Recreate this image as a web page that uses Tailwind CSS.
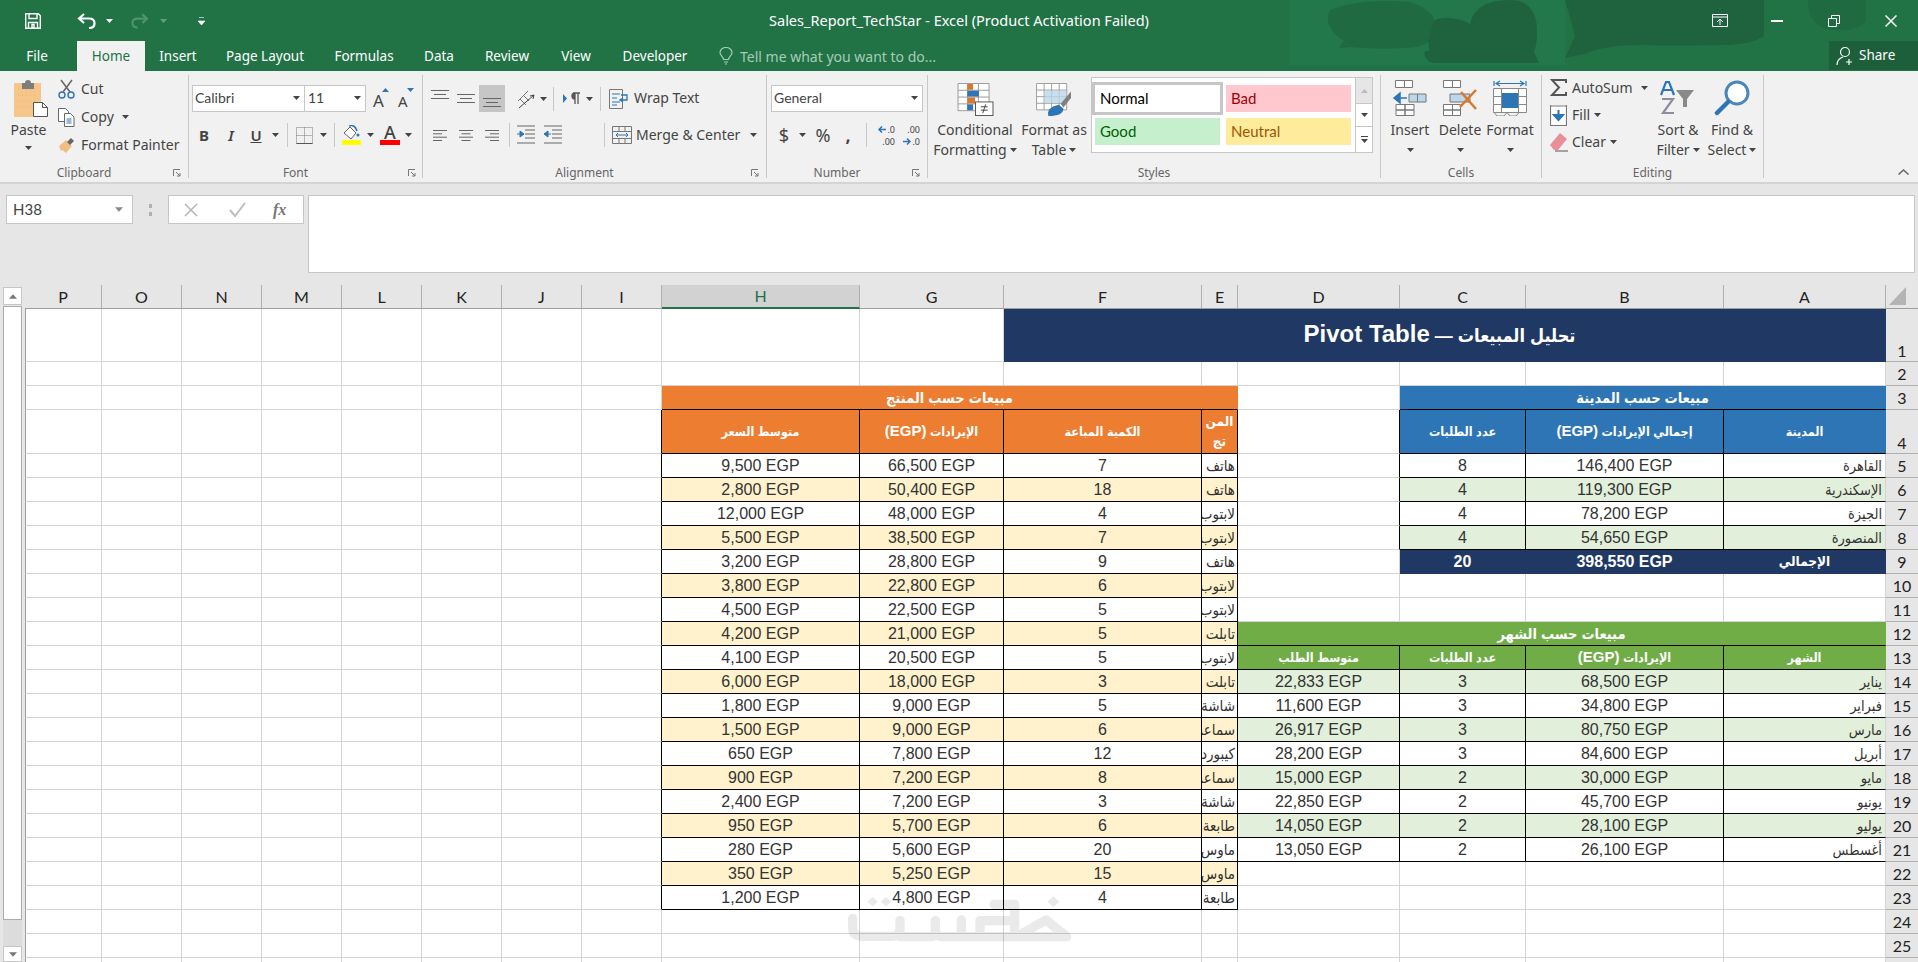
<!DOCTYPE html>
<html lang="en">
<head>
<meta charset="UTF-8">
<title>Sales_Report_TechStar - Excel</title>
<script src="https://cdn.jsdelivr.net/npm/@tailwindcss/browser@4"></script>
</head>
<body class="h-screen overflow-hidden flex flex-col bg-[#e6e6e6] font-['Noto_Sans',sans-serif] text-[#444]">

<svg class="hidden">
  <symbol id="caret" viewBox="0 0 7 4"><path d="M0 0h7L3.5 4z" fill="currentColor"/></symbol>
  <symbol id="launcher" viewBox="0 0 8 8"><path d="M.5 7V.5H7M3 3l4 4M7 4v3H4" fill="none" stroke="#777"/></symbol>
</svg>

<!-- Title bar and tabs -->
<header class="relative h-[71px] shrink-0 bg-[#217346] text-white">
  <svg class="absolute left-0 top-0 w-[1918px] h-[65px]" viewBox="0 0 1918 65">
    <path d="M1290 0h275v65h-275z" fill="#22774b"/>
    <path d="M1330 10q30-12 80-8 26 8 26 26 0 18-30 20-30 2-55-1l-12 1 5-7q-22-14-14-31z" fill="#1f6a41"/>
    <path d="M1432 28q0-12 18-10 12 1 20 6 5-24 40-24 28 0 27 34 0 10-3 18l5 11h-105q-8 0-10-11l6-2q-4-8 2-22z" fill="#1f633e"/>
    <path d="M1565 0h199v36q-10 8-40 9-60 1-80 0-40 0-60 9l-19 4 10-22z" fill="#1f633e"/>
    <path d="M1808 0h58v22q-12 10-30 8-28 0-28-30z" fill="#1f6a41"/>
  </svg>

  <div class="relative grid grid-cols-[1fr_auto_1fr] items-center h-[41px]">
    <div class="flex items-center pl-[25px]">
      <svg class="w-[16px] h-[16px]" viewBox="0 0 16 16"><path d="M.7.7h12.6l2 2v12.6H.7z" fill="none" stroke="#fff" stroke-width="1.4"/><path d="M4 1v4.5h8V1M3.5 15V9.5h9V15M7 11.5h2V15H7z" fill="none" stroke="#fff" stroke-width="1.4"/></svg>
      <svg class="ml-[36px] w-[19px] h-[16px]" viewBox="0 0 19 16"><path d="M7 1 2 5.5 7 10M2.5 5.5H12q5.500 0 5.500 4.700T12 15" fill="none" stroke="#fff" stroke-width="2.200"/></svg>
      <svg class="ml-[10px] w-[7px] h-[4px]"><use href="#caret"/></svg>
      <svg class="ml-[18px] w-[18px] h-[16px] opacity-40" viewBox="0 0 19 16"><path d="M12 1l5 4.500L12 10M16.500 5.500H7Q1.500 5.500 1.500 10.200T7 15" fill="none" stroke="#8fc7a8" stroke-width="2.200"/></svg>
      <svg class="ml-[11px] w-[7px] h-[4px] opacity-30"><use href="#caret"/></svg>
      <svg class="ml-[31px] w-[7px] h-[8px]" viewBox="0 0 7 8"><path d="M1 .5h5M0 4h7L3.500 8z" fill="#fff" stroke="#fff" stroke-width=".6"/></svg>
    </div>
    <div class="text-[14.5px] whitespace-nowrap">Sales_Report_TechStar - Excel (Product Activation Failed)</div>
    <div class="flex items-center justify-end pr-[21px]">
      <svg class="w-[16px] h-[13px]" viewBox="0 0 16 13"><path d="M.5.500h15v12H.5zM.5 3h15M8 11V5M5 8l3-3 3 3" fill="none" stroke="#fff"/></svg>
      <div class="ml-[43px] w-[12px] h-[2px] bg-white"></div>
      <svg class="ml-[45px] w-[12px] h-[12px]" viewBox="0 0 12 12"><path d="M.5 3.500h8v8h-8zM3.500 3.500V.5h8v8h-3" fill="none" stroke="#fff"/></svg>
      <svg class="ml-[45px] w-[12px] h-[12px]" viewBox="0 0 12 12"><path d="M.5.5l11 11M11.500.5l-11 11" stroke="#fff" stroke-width="1.500"/></svg>
    </div>
  </div>

  <nav class="relative flex h-[30px] text-[13.5px]">
    <div class="w-[74px] mr-[3px] flex items-center justify-center">File</div>
    <div class="w-[68px] flex items-center justify-center bg-[#f1f1f1] text-[#217346]">Home</div>
    <div class="w-[66px] flex items-center justify-center">Insert</div>
    <div class="w-[108px] flex items-center justify-center">Page Layout</div>
    <div class="w-[90px] flex items-center justify-center">Formulas</div>
    <div class="w-[60px] flex items-center justify-center">Data</div>
    <div class="w-[76px] flex items-center justify-center">Review</div>
    <div class="w-[62px] flex items-center justify-center">View</div>
    <div class="w-[96px] flex items-center justify-center">Developer</div>
    <div class="ml-[16px] flex items-center text-[14px] text-[#a6cbb6]">
      <svg class="w-[14px] h-[18px] mr-[7px]" viewBox="0 0 14 18"><path d="M4.500 12.500C4 9 1 8.500 1 5.500a6 5 0 0 1 12 0c0 3-3 3.500-3.500 7zM5 15h4M6 17h2" fill="none" stroke="#a6cbb6" stroke-width="1.200"/></svg>
      Tell me what you want to do...
    </div>
    <div class="ml-auto w-[89px] h-[29px] flex items-center bg-[#1d5f3b] pl-[7px]">
      <svg class="w-[20px] h-[20px] mr-[3px]" viewBox="0 0 20 20"><circle cx="9" cy="6" r="4.500" fill="none" stroke="#fff" stroke-width="1.200"/><path d="M1 19c0-5 3-7 6-8M13 13v6M10 16h6" fill="none" stroke="#fff" stroke-width="1.200"/></svg>
      Share
    </div>
  </nav>
</header>

<!-- Ribbon -->
<section class="h-[113px] shrink-0 flex bg-[#f1f1f1] border-b-2 border-[#d4d4d4] text-[14px] leading-none">

  <div class="w-[189px] h-[103px] my-[4px] border-r border-[#c8c8c8] flex flex-col">
    <div class="h-[89px] flex">
      <div class="w-[57px] flex flex-col items-center">
        <svg class="mt-[4px] ml-[6px] w-[35px] h-[38px]" viewBox="0 0 35 38">
          <rect x="0" y="4" width="27" height="34" fill="#f5c58a"/>
          <path d="M4 10h19M4 16h19M4 22h19M4 28h19" stroke="#eeb06c" stroke-dasharray="1 3"/>
          <path d="M8 4h3a3 3 0 0 1 6 0h3v6H8z" fill="#7d7d7d"/>
          <path d="M19.500 23.500h9l5 5v9h-14z" fill="#fff" stroke="#555"/>
          <path d="M28.500 23.500v5h5" fill="none" stroke="#555"/>
        </svg>
        <span class="mt-[6px]">Paste</span>
        <svg class="mt-[9px] w-[7px] h-[4px]"><use href="#caret"/></svg>
      </div>
      <div class="flex flex-col pl-[1px]">
        <div class="h-[28px] flex items-center">
          <svg class="w-[17px] h-[20px] mr-[6px]" viewBox="0 0 17 20"><path d="M3 1l9 12M14 1 5 13" stroke="#666" stroke-width="1.500"/><circle cx="4" cy="16" r="3" fill="none" stroke="#2e75b6" stroke-width="1.400"/><circle cx="13" cy="16" r="3" fill="none" stroke="#2e75b6" stroke-width="1.400"/></svg>
          Cut
        </div>
        <div class="h-[28px] flex items-center">
          <svg class="w-[17px] h-[19px] mr-[6px]" viewBox="0 0 17 19"><path d="M.5.500h7l3 3v10H.5z" fill="#fff" stroke="#666"/><path d="M6.500 5.500h6l3.500 3.500v9.500H6.500z" fill="#fff" stroke="#666"/><path d="M8.500 11h5M8.500 13h5M8.500 15h5" stroke="#2e75b6"/></svg>
          Copy
          <svg class="ml-[8px] w-[7px] h-[4px]"><use href="#caret"/></svg>
        </div>
        <div class="h-[28px] flex items-center">
          <svg class="w-[17px] h-[17px] mr-[6px]" viewBox="0 0 17 17"><path d="M1 9l7-6 6 6-6 7q-2-1-3-3l-2 1z" fill="#f2bd84"/><path d="M9 5l4-4 3 3-4 4z" fill="#666"/></svg>
          Format Painter
        </div>
      </div>
    </div>
    <div class="relative h-[14px] pt-[3px] pr-[20px] text-center text-[12px] text-[#666]">Clipboard<svg class="absolute right-[7px] top-[5px] w-[8px] h-[8px]"><use href="#launcher"/></svg></div>
  </div>

  <div class="w-[234px] h-[103px] my-[4px] border-r border-[#c8c8c8] flex flex-col">
    <div class="h-[89px]">
      <div class="flex items-center mt-[10px] ml-[3px] h-[27px]">
        <div class="w-[113px] h-[27px] bg-white border border-[#c6c6c6] flex items-center justify-between pl-[2px] pr-[4px] pb-[2px] text-[14px] leading-[18px] font-['Lato',sans-serif]">Calibri<svg class="w-[7px] h-[4px]"><use href="#caret"/></svg></div>
        <div class="w-[61px] h-[27px] bg-white border border-l-0 border-[#c6c6c6] flex items-center justify-between pl-[3px] pr-[4px] pb-[2px] text-[14px] leading-[18px] font-['Lato',sans-serif]">11<svg class="w-[7px] h-[4px]"><use href="#caret"/></svg></div>
        <div class="relative ml-[7px] w-[16px] h-[22px] text-[17px] leading-[22px] pt-[2px]">A<svg class="absolute right-0 top-0 w-[7px] h-[4px] rotate-180 text-[#2e75b6]"><use href="#caret"/></svg></div>
        <div class="relative ml-[9px] w-[16px] h-[22px] text-[15px] leading-[22px] pt-[2px]">A<svg class="absolute right-0 top-0 w-[7px] h-[4px] text-[#2e75b6]"><use href="#caret"/></svg></div>
      </div>
      <div class="flex items-center mt-[11px] h-[24px]">
        <span class="ml-[1px] w-[28px] text-center font-bold text-[15px]">B</span>
        <span class="w-[26px] text-center italic font-semibold text-[15px]">I</span>
        <span class="w-[24px] text-center underline font-semibold text-[15px]">U</span>
        <svg class="ml-[4px] w-[7px] h-[4px]"><use href="#caret"/></svg>
        <div class="ml-[8px] w-px h-[24px] bg-[#c8c8c8]"></div>
        <svg class="ml-[8px] w-[17px] h-[17px]" viewBox="0 0 17 17"><path d="M.5.500h16v16H.5zM8.500.500v16M.5 8.500h16" fill="none" stroke="#777" stroke-dasharray="1 1"/><path d="M.5 16.500h16" stroke="#555"/></svg>
        <svg class="ml-[7px] w-[7px] h-[4px]"><use href="#caret"/></svg>
        <div class="ml-[7px] w-px h-[24px] bg-[#c8c8c8]"></div>
        <div class="ml-[7px] w-[19px] flex flex-col items-center">
          <svg class="w-[17px] h-[15px]" viewBox="0 0 17 15"><path d="M1 8l6-6 6 6-5 6z" fill="#fff" stroke="#666"/><path d="M6 1q6-2 8 5" fill="none" stroke="#2e75b6" stroke-width="1.500"/><circle cx="15" cy="10" r="1.500" fill="#2e75b6"/></svg>
          <div class="w-[19px] h-[5px] bg-[#ffff00]"></div>
        </div>
        <svg class="ml-[6px] w-[7px] h-[4px]"><use href="#caret"/></svg>
        <div class="ml-[6px] w-[20px] flex flex-col items-center">
          <span class="text-[18px] leading-[15px] h-[15px] font-medium">A</span>
          <div class="w-[20px] h-[5px] bg-[#ff0000]"></div>
        </div>
        <svg class="ml-[5px] w-[7px] h-[4px]"><use href="#caret"/></svg>
      </div>
    </div>
    <div class="relative h-[14px] pt-[3px] pr-[20px] text-center text-[12px] text-[#666]">Font<svg class="absolute right-[6px] top-[5px] w-[8px] h-[8px]"><use href="#launcher"/></svg></div>
  </div>

  <div class="w-[344px] h-[103px] my-[4px] border-r border-[#c8c8c8] flex flex-col">
    <div class="h-[89px]">
      <div class="flex items-center mt-[10px] h-[27px]">
        <div class="ml-[4px] w-[26px] h-[27px] flex items-start justify-center pt-[5px]"><svg class="w-[18px] h-[9px]" viewBox="0 0 18 9"><path d="M0 .5h18M3 4.500h12M0 8.500h18" stroke="#666"/></svg></div>
        <div class="w-[26px] h-[27px] flex items-center justify-center"><svg class="w-[18px] h-[9px]" viewBox="0 0 18 9"><path d="M0 .5h18M3 4.500h12M0 8.500h18" stroke="#666"/></svg></div>
        <div class="w-[26px] h-[27px] flex items-end justify-center pb-[5px] bg-[#c6c6c6]"><svg class="w-[18px] h-[9px]" viewBox="0 0 18 9"><path d="M0 .5h18M3 4.500h12M0 8.500h18" stroke="#666"/></svg></div>
        <svg class="ml-[12px] w-[20px] h-[20px]" viewBox="0 0 20 20"><path d="M1 12 11 2M6 6l6 6M3 10l6 6" stroke="#777" fill="none"/><path d="M2 19 17 6m0 0-4 1m4-1-1 4" stroke="#444" fill="none"/></svg>
        <svg class="ml-[3px] w-[7px] h-[4px]"><use href="#caret"/></svg>
        <div class="ml-[6px] w-px h-[24px] bg-[#c8c8c8]"></div>
        <svg class="ml-[9px] w-[19px] h-[13px]" viewBox="0 0 19 13"><path d="M0 2v9l4-4.500z" fill="#2e75b6"/><path d="M10 1h7M12 1v11M15 1v11M12 1a3 3 0 0 0 0 6" fill="#555" stroke="#555" stroke-width="1.300"/></svg>
        <svg class="ml-[4px] w-[7px] h-[4px]"><use href="#caret"/></svg>
        <div class="ml-[7px] w-px h-[24px] bg-[#c8c8c8]"></div>
        <svg class="ml-[8px] w-[20px] h-[20px]" viewBox="0 0 20 20"><path d="M.5.500h13v19H.5z" fill="none" stroke="#777"/><path d="M3 5h8M3 9h5M3 13h8M3 16h5" stroke="#2e75b6"/><path d="M12 6h6v5h-6m2-2-3 2 3 2" fill="none" stroke="#2e75b6" stroke-width="1.300"/></svg>
        <span class="ml-[5px] mb-[2px]">Wrap Text</span>
      </div>
      <div class="flex items-center mt-[11px] h-[24px]">
        <div class="ml-[4px] w-[26px] flex justify-center"><svg class="w-[14px] h-[11px]" viewBox="0 0 14 11"><path d="M0 .5h14M0 3.800h9M0 7.200h14M0 10.500h9" stroke="#666"/></svg></div>
        <div class="w-[26px] flex justify-center"><svg class="w-[14px] h-[11px]" viewBox="0 0 14 11"><path d="M0 .5h14M2.500 3.800h9M0 7.200h14M2.500 10.500h9" stroke="#666"/></svg></div>
        <div class="w-[26px] flex justify-center"><svg class="w-[14px] h-[11px]" viewBox="0 0 14 11"><path d="M0 .5h14M5 3.800h9M0 7.200h14M5 10.500h9" stroke="#666"/></svg></div>
        <div class="ml-[4px] w-px h-[24px] bg-[#c8c8c8]"></div>
        <div class="ml-[3px] w-[26px] flex justify-center"><svg class="w-[18px] h-[20px]" viewBox="0 0 18 20"><path d="M0 1h18M8 5h10M8 9h10M8 13h10M0 18h18" stroke="#666"/><path d="M0 9h5M3 6l4 3-4 3z" fill="#2e75b6" stroke="#2e75b6"/></svg></div>
        <div class="ml-[1px] w-[26px] flex justify-center"><svg class="w-[18px] h-[20px]" viewBox="0 0 18 20"><path d="M0 1h18M8 5h10M8 9h10M8 13h10M0 18h18" stroke="#666"/><path d="M7 9H2M4 6 0 9l4 3z" fill="#2e75b6" stroke="#2e75b6"/></svg></div>
        <div class="ml-[38px] w-px h-[24px] bg-[#c8c8c8]"></div>
        <svg class="ml-[7px] w-[20px] h-[18px]" viewBox="0 0 20 18"><path d="M.5.500h19v17H.5zM.5 5.500h19M.5 12.500h19M7 .5v5M13 .5v5M7 12.500v5M13 12.500v5" fill="none" stroke="#777"/><path d="M4 9h12M6 7 4 9l2 2M14 7l2 2-2 2" fill="none" stroke="#2e75b6"/></svg>
        <span class="ml-[4px]">Merge &amp; Center</span>
        <svg class="ml-[10px] w-[7px] h-[4px]"><use href="#caret"/></svg>
      </div>
    </div>
    <div class="relative h-[14px] pt-[3px] pr-[20px] text-center text-[12px] text-[#666]">Alignment<svg class="absolute right-[7px] top-[5px] w-[8px] h-[8px]"><use href="#launcher"/></svg></div>
  </div>

  <div class="w-[161px] h-[103px] my-[4px] border-r border-[#c8c8c8] flex flex-col">
    <div class="h-[89px]">
      <div class="mt-[10px] ml-[4px] w-[152px] h-[27px] bg-white border border-[#c6c6c6] flex items-center justify-between pl-[2px] pr-[4px] pb-[2px] text-[14px] leading-[18px] font-['Lato',sans-serif]">General<svg class="w-[7px] h-[4px]"><use href="#caret"/></svg></div>
      <div class="flex items-center mt-[11px] h-[24px]">
        <span class="ml-[9px] w-[16px] text-center text-[18px]">$</span>
        <svg class="ml-[7px] w-[7px] h-[4px]"><use href="#caret"/></svg>
        <span class="ml-[6px] w-[22px] text-center text-[18px]">%</span>
        <span class="ml-[6px] w-[16px] text-center text-[18px] font-bold">,</span>
        <div class="ml-[10px] w-px h-[24px] bg-[#c8c8c8]"></div>
        <div class="ml-[6px] w-[22px] flex flex-col items-end gap-[1px] text-[9px] leading-[11px]">
          <div class="flex items-center"><svg class="w-[8px] h-[7px] mr-[1px]" viewBox="0 0 8 7"><path d="M8 3.500H2M4 .5l-3 3 3 3" fill="none" stroke="#2e75b6" stroke-width="1.500"/></svg>.0</div>
          <div>.00</div>
        </div>
        <div class="ml-[3px] w-[22px] flex flex-col items-end gap-[1px] text-[9px] leading-[11px]">
          <div>.00</div>
          <div class="flex items-center"><svg class="w-[8px] h-[7px] mr-[1px]" viewBox="0 0 8 7"><path d="M0 3.500h6M4 .5l3 3-3 3" fill="none" stroke="#2e75b6" stroke-width="1.500"/></svg>.0</div>
        </div>
      </div>
    </div>
    <div class="relative h-[14px] pt-[3px] pr-[20px] text-center text-[12px] text-[#666]">Number<svg class="absolute right-[7px] top-[5px] w-[8px] h-[8px]"><use href="#launcher"/></svg></div>
  </div>

  <div class="w-[453px] h-[103px] my-[4px] border-r border-[#c8c8c8] flex flex-col">
    <div class="h-[89px] flex">
      <div class="ml-[5px] w-[84px] flex flex-col items-center text-center leading-[20px]">
        <svg class="mt-[8px] mb-[4px] w-[37px] h-[33px]" viewBox="0 0 37 34">
          <path d="M.5.500h32v28H.5zM.5 7.500h32M.5 14.500h32M.5 21.500h32M10.500.5v28M21.500.5v28" fill="#fff" stroke="#999"/>
          <rect x="10" y="1" width="6" height="6" fill="#d9792e"/><rect x="10" y="8" width="12" height="6" fill="#2e75b6"/><rect x="10" y="15" width="8" height="6" fill="#d9792e"/><rect x="10" y="22" width="6" height="6" fill="#2e75b6"/>
          <rect x="18.500" y="19.500" width="18" height="14" fill="#fff" stroke="#555"/><path d="M24 24.500h7M24 28h7M29 22l-3 9" stroke="#444" fill="none"/>
        </svg>
        <span>Conditional</span>
        <span class="flex items-center">Formatting<svg class="ml-[3px] w-[7px] h-[4px]"><use href="#caret"/></svg></span>
      </div>
      <div class="ml-[1px] w-[72px] flex flex-col items-center text-center leading-[20px]">
        <svg class="mt-[8px] mb-[4px] w-[38px] h-[33px]" viewBox="0 0 38 35">
          <path d="M.5.500h32v28H.5zM.5 7.500h32M.5 14.500h32M.5 21.500h32M8.500.5v28M16.500.5v28M24.500.5v28" fill="#fff" stroke="#999"/>
          <path d="M9 8h23v13H9z" fill="#bcd6ea" opacity=".8"/>
          <path d="M37 9 26 22l3 4 8-10z" fill="#808080"/>
          <path d="M13 35q-2-6 5-10l6-2 5 4q0 8-16 8z" fill="#2e75b6"/>
        </svg>
        <span>Format as</span>
        <span class="flex items-center">Table<svg class="ml-[3px] w-[7px] h-[4px]"><use href="#caret"/></svg></span>
      </div>
      <div class="ml-[1px] mt-[2px] w-[282px] h-[76px] bg-white border border-[#c6c6c6] flex">
        <div class="flex-1 grid grid-cols-[125px_125px] grid-rows-[27px_27px] gap-x-[6px] gap-y-[6px] pl-[3px] pt-[7px] text-[15px] leading-[20px] font-['Lato',sans-serif]">
          <div class="ring-[3px] ring-[#c6c6c6] bg-white text-black flex items-center pl-[5px] pb-[2px]">Normal</div>
          <div class="bg-[#ffc7ce] text-[#9c0006] flex items-center pl-[5px] pb-[2px]">Bad</div>
          <div class="bg-[#c6efce] text-[#006100] flex items-center pl-[5px] pb-[2px]">Good</div>
          <div class="bg-[#ffeb9c] text-[#9c5700] flex items-center pl-[5px] pb-[2px]">Neutral</div>
        </div>
        <div class="w-[17px] flex flex-col border-l border-[#c6c6c6]">
          <div class="h-[26px] bg-[#e6e6e6] border-b border-[#c6c6c6] flex items-center justify-center text-[#bbb]"><svg class="w-[7px] h-[4px] rotate-180"><use href="#caret"/></svg></div>
          <div class="h-[23px] border-b border-[#c6c6c6] flex items-center justify-center"><svg class="w-[7px] h-[4px]"><use href="#caret"/></svg></div>
          <div class="flex-1 flex flex-col items-center justify-center gap-[2px]"><div class="w-[7px] h-px bg-[#444]"></div><svg class="w-[7px] h-[4px]"><use href="#caret"/></svg></div>
        </div>
      </div>
    </div>
    <div class="h-[14px] pt-[3px] text-center text-[12px] text-[#666]">Styles</div>
  </div>

  <div class="w-[161px] h-[103px] my-[4px] border-r border-[#c8c8c8] flex flex-col">
    <div class="h-[89px] flex pl-[4px]">
      <div class="w-[50px] flex flex-col items-center leading-[20px]">
        <svg class="mt-[5px] mb-[4px] w-[36px] h-[36px]" viewBox="0 0 36 36"><path d="M3.500.5h9v7h-9zM12.500.5h8v7h-8zM4 24.500h9v5.500H4zM13 24.500h9v5.500H13zM4 30h9v5.500H4zM13 30h9v5.500H13z" fill="#fff" stroke="#777"/><path d="M17 14h17v8H17zM25.500 14v8" fill="#bcd6ea" stroke="#777"/><path d="M15 18H4M8 13l-6 5 6 5z" fill="#2e75b6" stroke="#2e75b6" stroke-width="1.500"/></svg>
        <span>Insert</span>
        <svg class="mt-[8px] w-[7px] h-[4px]"><use href="#caret"/></svg>
      </div>
      <div class="w-[50px] flex flex-col items-center leading-[20px]">
        <svg class="mt-[5px] mb-[4px] w-[36px] h-[36px]" viewBox="0 0 36 36"><path d="M1.500.5h9v7h-9zM10.500.5h8v7h-8zM1.500 24.500h9v5.500h-9zM10.500 24.500h8v5.500h-8zM1.500 30h9v5.500h-9zM10.500 30h8v5.500h-8z" fill="#fff" stroke="#777"/><path d="M8 14h20v8H8z" fill="#bcd6ea" stroke="#777"/><path d="M19 12l15 17M34 10 18 27" stroke="#d9792e" stroke-width="2.500"/></svg>
        <span>Delete</span>
        <svg class="mt-[8px] w-[7px] h-[4px]"><use href="#caret"/></svg>
      </div>
      <div class="w-[50px] flex flex-col items-center leading-[20px]">
        <svg class="mt-[5px] mb-[4px] w-[34px] h-[36px]" viewBox="0 0 34 36"><path d="M1 1v5M33 1v5M3 3.500h28M7 1 3 3.500 7 6M27 1l4 2.500L27 6" fill="none" stroke="#2e75b6" stroke-width="1.200"/><path d="M.5 8.500h33v24H.5zM.5 16.500h33M.5 24.500h33M8.500 8.500v24M25.500 8.500v24" fill="#fff" stroke="#888"/><rect x="9" y="13" width="16" height="15" fill="#2e75b6"/><path d="M1 32.500 4 36h7l3-3.500 3 3.500h6l3-3.500" fill="none" stroke="#888"/></svg>
        <span>Format</span>
        <svg class="mt-[8px] w-[7px] h-[4px]"><use href="#caret"/></svg>
      </div>
    </div>
    <div class="h-[14px] pt-[3px] text-center text-[12px] text-[#666]">Cells</div>
  </div>

  <div class="w-[222px] h-[103px] my-[4px] border-r border-[#c8c8c8] flex flex-col">
    <div class="h-[89px] flex">
      <div class="w-[109px] pl-[8px] -mt-[1px]">
        <div class="h-[27px] flex items-center">
          <svg class="w-[18px] h-[17px] mr-[4px]" viewBox="0 0 18 17"><path d="M16 4V1H2l7 7.500L2 16h14v-3" fill="none" stroke="#555" stroke-width="2"/></svg>
          AutoSum
          <svg class="ml-[8px] w-[7px] h-[4px]"><use href="#caret"/></svg>
        </div>
        <div class="h-[27px] flex items-center">
          <svg class="w-[17px] h-[22px] mr-[5px]" viewBox="0 0 17 22"><path d="M.5 2h16M.5 1v20.500h16V1" fill="#fff" stroke="#777" stroke-width="1.200"/><path d="M8.500 6v9M4 11l4.500 5 4.500-5z" fill="#2e75b6" stroke="#2e75b6" stroke-width="2"/></svg>
          Fill
          <svg class="ml-[4px] w-[7px] h-[4px]"><use href="#caret"/></svg>
        </div>
        <div class="h-[27px] flex items-center">
          <svg class="w-[18px] h-[20px] mr-[4px]" viewBox="0 0 18 20"><path d="M0 13 10 1l7 6L8 18H4z" fill="#e98d98"/><path d="M5 19h13" stroke="#555"/></svg>
          Clear
          <svg class="ml-[4px] w-[7px] h-[4px]"><use href="#caret"/></svg>
        </div>
      </div>
      <div class="w-[54px] flex flex-col items-center leading-[20px]">
        <svg class="mt-[5px] mb-[4px] w-[36px] h-[36px]" viewBox="0 0 36 36"><path d="M1 15 6 2h3l5 13M3.500 10h8" fill="none" stroke="#2e75b6" stroke-width="2.200"/><path d="M2 19h11L3 33h11" fill="none" stroke="#8d8da0" stroke-width="2.200"/><path d="M16 10h18l-7 9v8h-4v-8z" fill="#8a8a8a"/></svg>
        <span>Sort &amp;</span>
        <span class="flex items-center">Filter<svg class="ml-[3px] w-[7px] h-[4px]"><use href="#caret"/></svg></span>
      </div>
      <div class="w-[54px] flex flex-col items-center leading-[20px]">
        <svg class="mt-[5px] mb-[4px] w-[36px] h-[36px]" viewBox="0 0 36 36"><circle cx="23" cy="13" r="11" fill="#fff" stroke="#4a86b8" stroke-width="3"/><path d="M14 22 3 33" stroke="#2e75b6" stroke-width="4.500" stroke-linecap="round"/></svg>
        <span>Find &amp;</span>
        <span class="flex items-center">Select<svg class="ml-[3px] w-[7px] h-[4px]"><use href="#caret"/></svg></span>
      </div>
    </div>
    <div class="h-[14px] pt-[3px] text-center text-[12px] text-[#666]">Editing</div>
  </div>

  <div class="flex-1 flex items-end justify-end pr-[9px] pb-[7px]">
    <svg class="w-[11px] h-[6px]" viewBox="0 0 11 6"><path d="M.5 5.500l5-4.500 5 4.500" fill="none" stroke="#666" stroke-width="1.500"/></svg>
  </div>
</section>

<!-- Formula bar -->
<section class="h-[101px] shrink-0 flex items-start pt-[11px] pl-[6px] pr-[3px]">
  <div class="w-[127px] h-[29px] bg-white border border-[#c6c6c6] flex items-center justify-between pl-[6px] pr-[9px] text-[15px] font-['Lato',sans-serif]">H38<svg class="w-[8px] h-[5px] text-[#888]"><use href="#caret"/></svg></div>
  <div class="ml-[16px] mt-[9px] w-[3px] h-[12px] border-l-[3px] border-dotted border-[#b0b0b0]"></div>
  <div class="ml-[16px] w-[136px] h-[29px] bg-white border border-[#c6c6c6] flex items-center text-[#aaa]">
    <svg class="ml-[15px] w-[14px] h-[14px]" viewBox="0 0 14 14"><path d="M1 1l12 12M13 1 1 13" stroke="#b5b5b5" stroke-width="1.500"/></svg>
    <svg class="ml-[31px] w-[17px] h-[15px]" viewBox="0 0 17 15"><path d="M1 8l5 6L16 1" fill="none" stroke="#bdbdbd" stroke-width="2"/></svg>
    <span class="ml-[27px] font-['Liberation_Serif',serif] italic font-bold text-[16px] text-[#777]">fx</span>
  </div>
  <div class="ml-[4px] flex-1 h-[78px] bg-white border border-[#c6c6c6]"></div>
</section>

<!-- Worksheet -->
<main class="relative flex-1 min-h-0 flex overflow-hidden">
  <div class="w-[25px] shrink-0 pl-[3px] pt-[2px] flex flex-col">
    <div class="w-[19px] h-[18px] bg-white border border-[#c6c6c6] flex items-center justify-center text-[#777]"><svg class="w-[8px] h-[5px] rotate-180"><use href="#caret"/></svg></div>
    <div class="w-[19px] h-[614px] shrink-0 bg-white border border-[#ababab] mt-[1px]"></div>
    <div class="w-[19px] flex-1 bg-[#dcdcdc]"></div>
    <div class="w-[19px] h-[16px] shrink-0 bg-white border border-[#c6c6c6] flex items-center justify-center text-[#777]"><svg class="w-[8px] h-[5px]"><use href="#caret"/></svg></div>
  </div>
  <table id="sheet" class="table-fixed border-separate border-spacing-0 w-[1893px] h-fit bg-white leading-[20px] font-['Liberation_Sans','DejaVu_Sans_Condensed','DejaVu_Sans',sans-serif] text-[16px] text-[#333]"></table>

  <svg class="absolute left-[840px] top-[600px] w-[250px] h-[70px] opacity-[0.08] pointer-events-none" viewBox="0 0 750 210">
    <g fill="none" stroke="#000" stroke-width="28" stroke-linejoin="round" stroke-linecap="round">
      <path d="M38 100v28q0 26 28 26h90q24 0 24-26v-22"/>
      <path d="M180 155h90q16 0 16-24v-24M286 131q0 24 24 24h40q14 0 14-24v-26"/>
      <path d="M364 155h160V58h-62"/>
      <path d="M440 155h-20v-48h84"/>
      <path d="M530 155h150l-62-50-88 50"/>
    </g>
    <path d="M82 50l16-14 16 14-16 14zM122 50l16-14 16 14-16 14zM622 50l18-16 18 16-18 16z" fill="#000"/>
  </svg>
</main>

<script>
  // columns run right-to-left in the sheet, P is leftmost
  const cols = [['P',77],['O',80],['N',80],['M',80],['L',80],['K',80],['J',80],['I',80],['H',198],['G',144],['F',198],['E',36],['D',162],['C',126],['B',198],['A',162]];
  const heights = { 1: 53, 4: 44 };
  const NAVY = 'bg-[#203864] text-white font-bold';
  const cream = 'bg-[#fff2cc]', mint = 'bg-[#e2efda]';

  const cells = {};
  const put = (r, c, text, cls = '', span = 1) => { cells[r + ':' + c] = { text, cls, span }; };

  // section titles and column heads: arabic in DejaVu runs wide, so it stays smaller than the latin
  const title = (t) => `<span dir="rtl" class="text-[14.5px]">${t}</span>`;
  const head = (t, latin = '') => `<span dir="rtl" class="text-[12.5px]">${t}${latin ? ` <span class="text-[15px]">${latin}</span>` : ''}</span>`;

  // blocks that carry black borders [top, left, bottom, right]
  const blocks = [[4, 8, 23, 11], [4, 13, 8, 15], [13, 12, 21, 15]];
  const inBlock = (r, c) => blocks.some(b => r >= b[0] && r <= b[2] && c >= b[1] && c <= b[3]);

  put(1, 10, `<span dir="rtl" class="block text-[18px] leading-[28px] pr-[10px]">تحليل المبيعات — <span class="text-[24px]">Pivot Table</span></span>`, NAVY, 6);

  // product table
  const ORANGE = 'bg-[#ed7d31] text-white font-bold';
  put(3, 8, title('مبيعات حسب المنتج'), ORANGE, 4);
  put(4, 8, head('متوسط السعر'), ORANGE);
  put(4, 9, head('الإيرادات', '(EGP)'), ORANGE);
  put(4, 10, head('الكمية المباعة'), ORANGE);
  put(4, 11, `<span dir="rtl" class="block text-[13.5px] leading-[20px]">المن<br>تج</span>`, ORANGE);
  const products = [
    ['هاتف',7,'66,500','9,500'],['هاتف',18,'50,400','2,800'],['لابتوب',4,'48,000','12,000'],['لابتوب',7,'38,500','5,500'],
    ['هاتف',9,'28,800','3,200'],['لابتوب',6,'22,800','3,800'],['لابتوب',5,'22,500','4,500'],['تابلت',5,'21,000','4,200'],
    ['لابتوب',5,'20,500','4,100'],['تابلت',3,'18,000','6,000'],['شاشة',5,'9,000','1,800'],['سماعة',6,'9,000','1,500'],
    ['كيبورد',12,'7,800','650'],['سماعة',8,'7,200','900'],['شاشة',3,'7,200','2,400'],['طابعة',6,'5,700','950'],
    ['ماوس',20,'5,600','280'],['ماوس',15,'5,250','350'],['طابعة',4,'4,800','1,200']
  ];
  products.forEach((p, i) => {
    const r = 5 + i, bg = r % 2 === 0 ? cream : '';
    put(r, 8, p[3] + ' EGP', bg);
    put(r, 9, p[2] + ' EGP', bg);
    put(r, 10, p[1], bg);
    put(r, 11, `<span dir="rtl" class="block text-right text-[15px] whitespace-nowrap pr-[2px]">${p[0]}</span>`, bg);
  });

  // city table
  const BLUE = 'bg-[#2e75b6] text-white font-bold';
  put(3, 13, title('مبيعات حسب المدينة'), BLUE, 3);
  put(4, 13, head('عدد الطلبات'), BLUE);
  put(4, 14, head('إجمالي الإيرادات', '(EGP)'), BLUE);
  put(4, 15, head('المدينة'), BLUE);
  const arabicCell = (t) => `<span dir="rtl" class="block text-right text-[14.5px] whitespace-nowrap pr-[3px]">${t}</span>`;
  [['القاهرة','146,400',8],['الإسكندرية','119,300',4],['الجيزة','78,200',4],['المنصورة','54,650',4]].forEach((d, i) => {
    const r = 5 + i, bg = r % 2 === 0 ? mint : '';
    put(r, 13, d[2], bg);
    put(r, 14, d[1] + ' EGP', bg);
    put(r, 15, arabicCell(d[0]), bg);
  });
  put(9, 13, '20', NAVY);
  put(9, 14, '398,550 EGP', NAVY);
  put(9, 15, `<span dir="rtl" class="text-[13.5px]">الإجمالي</span>`, NAVY);

  // month table
  const GREEN = 'bg-[#70ad47] text-white font-bold';
  put(12, 12, title('مبيعات حسب الشهر'), GREEN, 4);
  put(13, 12, head('متوسط الطلب'), GREEN);
  put(13, 13, head('عدد الطلبات'), GREEN);
  put(13, 14, head('الإيرادات', '(EGP)'), GREEN);
  put(13, 15, head('الشهر'), GREEN);
  [['يناير','68,500',3,'22,833'],['فبراير','34,800',3,'11,600'],['مارس','80,750',3,'26,917'],['أبريل','84,600',3,'28,200'],
   ['مايو','30,000',2,'15,000'],['يونيو','45,700',2,'22,850'],['يوليو','28,100',2,'14,050'],['أغسطس','26,100',2,'13,050']].forEach((d, i) => {
    const r = 14 + i, bg = r % 2 === 0 ? mint : '';
    put(r, 12, d[3] + ' EGP', bg);
    put(r, 13, d[2], bg);
    put(r, 14, d[1] + ' EGP', bg);
    put(r, 15, arabicCell(d[0]), bg);
  });

  let html = '<colgroup>' + cols.map(c => `<col style="width:${c[1]}px">`).join('') + '<col style="width:32px"></colgroup>';

  html += '<tr class="h-[24px]">' + cols.map((c) =>
    c[0] === 'H'
      ? `<th class="p-0 bg-[#d2d2d2] font-['Lato',sans-serif] font-normal text-[#217346] border-r border-r-[#b0b0b0] border-b-2 border-b-[#217346]">H</th>`
      : `<th class="p-0 bg-[#e6e6e6] font-['Lato',sans-serif] font-normal text-[#222] border-r border-r-[#b0b0b0] border-b border-b-[#9e9e9e]">${c[0]}</th>`
  ).join('') + `<th class="p-0 bg-[#e6e6e6] border-b border-b-[#9e9e9e] align-top"><svg class="ml-[3px] mt-[2px] w-[17px] h-[18px]" viewBox="0 0 17 18"><path d="M17 0v18H0z" fill="#b4b4b4"/></svg></th></tr>`;

  for (let r = 1; r <= 26; r++) {
    const h = heights[r] || 24;
    html += `<tr style="height:${h}px">`;
    for (let c = 0; c < cols.length; c++) {
      const cell = cells[r + ':' + c] || { text: '', cls: '', span: 1 };
      const last = c + cell.span - 1;
      const filled = /text-white/.test(cell.cls);
      const blackRight = (inBlock(r, last) && last !== 15) || inBlock(r, last + 1);
      const blackBottom = inBlock(r, c) || inBlock(r + 1, c);
      const right = blackRight ? 'border-r-black' : filled ? 'border-r-transparent' : 'border-r-[#d4d4d4]';
      const bottom = blackBottom ? 'border-b-black' : filled ? 'border-b-transparent' : 'border-b-[#d4d4d4]';
      const left = c === 0 ? 'border-l border-l-[#9e9e9e]' : '';
      html += `<td colspan="${cell.span}" class="p-0 text-center align-middle whitespace-nowrap overflow-hidden border-r border-b ${left} ${right} ${bottom} ${cell.cls}">${cell.text}</td>`;
      c = last;
    }
    const align = (r === 1 || r === 4) ? 'align-bottom' : 'align-middle';
    html += `<td class="p-0 text-center ${align} bg-[#e6e6e6] border-b border-b-[#b0b0b0] font-['Lato',sans-serif] text-[#222]">${r <= 25 ? r : ''}</td></tr>`;
  }
  document.getElementById('sheet').innerHTML = html;
</script>
</body>
</html>
